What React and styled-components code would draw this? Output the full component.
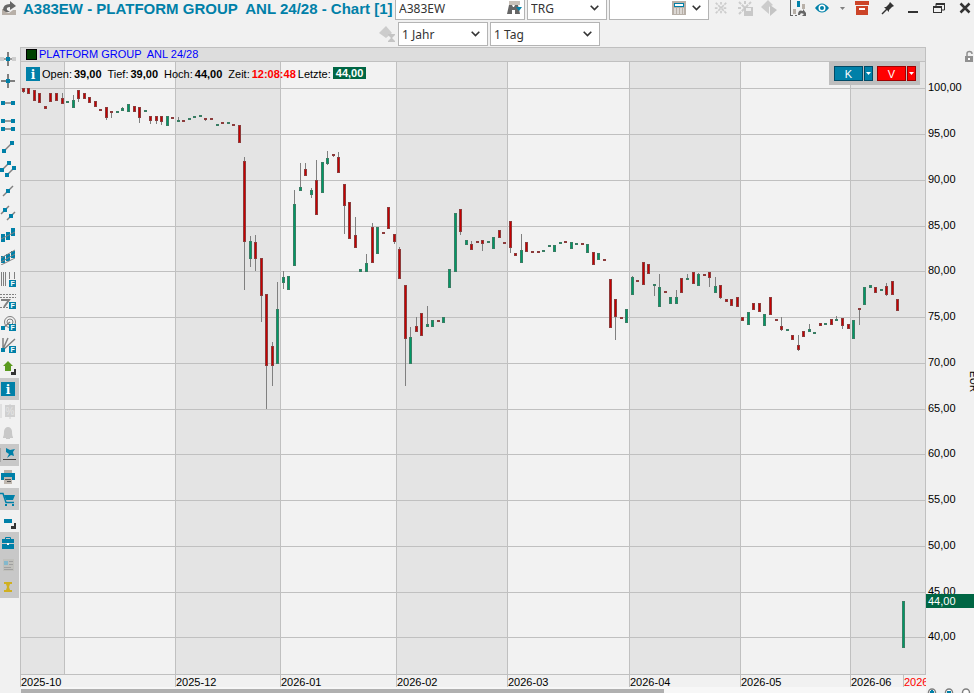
import React from 'react';
import styled, { createGlobalStyle } from 'styled-components'

const BLUE = '#0080a8'
const GREY = '#808080'

const GlobalStyle = createGlobalStyle`
     body {
          margin:0;
          background:#f1f1f1;
          overflow:hidden;
     }
     * {
          box-sizing:border-box;
     }
     button, input, select {
          font:inherit;
          color:inherit;
          margin:0;
          padding:0;
          border:0;
          background:none;
     }
     svg {
          display:block;
          flex:none;
     }
`

const Window = styled.main`
     font-family:'Liberation Sans', Arial, sans-serif;
     font-size:11px;
     color:#000;
`

const Header = styled.header`
     display:flex;
     height:20px;
     align-items:flex-end;
     overflow:hidden;
`

const Title = styled.h1`
     display:flex;
     flex:0 0 395px;
     align-items:center;
     gap:5px;
     height:24px;
     margin:0;
     padding:2px 0 0 2px;
     font-size:15px;
     line-height:20px;
     font-weight:bold;
     color:${BLUE};
     white-space:pre;
`

const Fields = styled.div`
     display:flex;
     gap:2px;
`

const PeriodBar = styled.div`
     display:flex;
     align-items:center;
     gap:2px;
     height:27px;
     padding:1px 0 0 378px;
`

const Field = styled.div`
     display:flex;
     position:relative;
     align-items:center;
     flex:none;
     width:${props => props.$width}px;
     height:24px;
     border:1px solid #b4b4b4;
     background:white;
     font-family:'Noto Sans', 'Open Sans', sans-serif;
     font-size:12px;
     color:#333;

     input, select {
          flex:1;
          min-width:0;
          height:22px;
          padding-left:3px;
          appearance:none;
          outline:none;
     }
`

const FieldIcons = styled.span`
     display:flex;
     position:absolute;
     right:7px;
     align-items:center;
     gap:6px;
     pointer-events:none;
`

const Tools = styled.div`
     display:flex;
     align-items:center;
     height:24px;
`

const Tool = styled.button`
     display:flex;
     align-items:center;
     justify-content:center;
     width:${props => props.$width || 24}px;
     height:24px;
     margin-left:${props => props.$gap || 0}px;
`

const WindowTools = styled(Tools)`
     gap:8px;
     margin-left:auto;
`

const Body = styled.div`
     display:grid;
     grid-template-columns:20px minmax(0, 1fr) 48px;
`

const Sidebar = styled.nav`
     display:flex;
     flex-direction:column;
     padding:1px 1px 0 0;
`

const SideButton = styled.button`
     display:flex;
     align-items:center;
     height:22px;
     background:${props => props.$active ? '#c8c8c8' : 'transparent'};
`

const Panel = styled.section`
     position:relative;
     border:1px solid #c0c0c0;
`

const PanelTitle = styled.h2`
     display:flex;
     align-items:center;
     gap:2px;
     height:14px;
     margin:0;
     padding-left:5px;
     border-bottom:1px solid #c0c0c0;
     background:#dddddd;
     font-size:11px;
     line-height:13px;
     font-weight:normal;
     color:#0000ff;
     white-space:pre;
`

const Swatch = styled.span`
     width:11px;
     height:11px;
     border:1px solid black;
     background:#004000;
`

const Plot = styled.svg`
     width:100%;
     height:612px;
`

const Quote = styled.div`
     display:flex;
     position:absolute;
     top:18px;
     left:4px;
     align-items:center;
     line-height:14px;
     white-space:nowrap;
`

const QuoteItem = styled.span`
     display:flex;
     gap:2px;
     margin-left:${props => props.$gap || 6}px;

     b {
          color:${props => props.$color || 'black'};
     }
`

const LastPrice = styled.b`
     && {
          height:12px;
          padding:0 3px;
          background:#006644;
          line-height:13px;
          color:white;
     }
`

const TradeBox = styled.div`
     display:flex;
     position:absolute;
     top:14px;
     right:5px;
     height:23px;
     padding:4px 4px 4px 5px;
     gap:4px;
     background:#bebebe;
`

const TradePair = styled.div`
     display:flex;
     gap:1px;
`

const TradeButton = styled.button`
     && {
          display:flex;
          align-items:center;
          justify-content:center;
          width:${props => props.$width}px;
          height:15px;
          border:1px solid ${props => props.$sell ? '#a00000' : '#004a66'};
          background:${props => props.$sell ? '#ff0000' : BLUE};
          color:white;
     }
`

const PriceScale = styled.svg`
     width:48px;
     height:627px;
`

const TimeScale = styled.div`
     display:grid;
     grid-column:2;
     grid-template-columns:${props => props.$columns};
     height:12px;
`

const TimeLabel = styled.span`
     overflow:hidden;
     border-left:1px solid #c0c0c0;
     line-height:15px;
     white-space:nowrap;
     color:${props => props.$current ? '#ff0000' : 'black'};
`

const ScrollTrack = styled.div`
     grid-column:2;
     height:6px;
     margin:0 0 0 1px;
     padding-top:2px;
     background:#f7f7f7;
`

const ScrollThumb = styled.div`
     width:71%;
     height:4px;
     background:#b0b0b0;
`

const ZoomTools = styled.div`
     display:flex;
     height:6px;
     gap:5px;
     overflow:hidden;
`

// plot space: x 21..925, y 62..674, one trading day is 5.535 wide
const FIRST_DAY = 23.3
const DAY = 5.535
const scaleY = price => Math.round(88.4 + (100 - price) * 9.15)

// [up, body top, body bottom, wick top, wick bottom]
const candles = [
     [0, 88, 92, 88, 93], [0, 88, 94], [0, 90, 101], [0, 93, 103], [0, 106, 109],
     [0, 93, 102], [0, 93, 101], [0, 98, 104, 93, 104], [1, 101, 103], [1, 100, 108, 95, 108],
     [0, 90, 99, 90, 102], [0, 93, 99], [0, 97, 103], [0, 101, 107], [0, 109, 111],
     [0, 107, 118, 107, 120], [0, 111, 113, 111, 118], [1, 111, 113], [1, 108, 111, 107, 111], [1, 104, 112],
     [0, 106, 112], [0, 107, 118, 107, 123], [1, 110, 112], [0, 116, 121, 116, 124], [0, 116, 121, 116, 124],
     [0, 116, 122, 116, 125], [1, 116, 126], [0, 117, 119], [1, 120, 122, 117, 122], [0, 120, 122],
     [1, 118, 120], [1, 116, 118], [1, 115, 117], [0, 118, 120, 118, 121], [0, 118, 120],
     [1, 124, 126], [0, 122, 124], [1, 122, 124], [0, 124, 126], [0, 125, 143],
     [0, 161, 242, 157, 290], [1, 241, 259, 236, 267], [0, 242, 259, 235, 271], [0, 258, 296, 258, 322], [0, 294, 366, 294, 409],
     [0, 346, 366, 342, 386], [1, 309, 364, 282, 364], [1, 277, 283, 271, 289], [1, 276, 290], [1, 204, 266, 190, 266],
     [1, 187, 191, 163, 191], [0, 169, 176, 163, 176], [1, 190, 195, 188, 198], [0, 180, 215, 160, 215], [1, 162, 193],
     [1, 158, 164, 151, 165], [0, 154, 156, 154, 157], [0, 157, 173, 152, 173], [0, 184, 206, 184, 234], [0, 202, 239],
     [0, 235, 248, 217, 248], [1, 269, 272], [1, 263, 272, 254, 272], [0, 227, 263, 223, 263], [1, 227, 254],
     [0, 232, 234], [0, 207, 229], [0, 234, 242, 234, 244], [0, 249, 279, 247, 279], [0, 285, 339, 285, 386],
     [1, 337, 364, 327, 364], [0, 326, 332, 317, 332], [0, 313, 336], [1, 324, 327, 306, 327], [1, 320, 327],
     [0, 320, 322], [1, 317, 323], [1, 269, 288], [1, 213, 272], [0, 209, 232, 209, 235],
     [1, 240, 245], [0, 244, 250, 241, 250], [0, 241, 243], [0, 240, 244, 240, 251], [1, 241, 243],
     [1, 237, 249], [0, 230, 238], [0, 242, 244], [0, 221, 248, 221, 253], [0, 253, 256],
     [1, 250, 263, 234, 263], [0, 242, 252], [0, 251, 253], [0, 251, 253], [1, 250, 252],
     [1, 245, 247], [1, 245, 252], [1, 242, 244], [0, 241, 243], [1, 242, 249],
     [1, 243, 245], [0, 243, 245], [1, 244, 253], [0, 252, 265], [1, 253, 260],
     [0, 259, 261], [0, 279, 328], [0, 299, 317, 299, 340], [0, 317, 319], [1, 309, 323],
     [1, 277, 295, 276, 295], [0, 280, 282], [0, 262, 285], [0, 264, 274], [1, 284, 286, 284, 296],
     [1, 287, 307, 274, 307], [0, 291, 293], [1, 297, 304], [1, 297, 304, 290, 304], [0, 278, 293],
     [1, 278, 280, 274, 280], [0, 272, 284], [1, 274, 286, 273, 286], [0, 274, 276], [0, 272, 278, 272, 287],
     [1, 286, 293, 277, 293], [0, 285, 298, 285, 299], [0, 299, 302], [0, 299, 306], [0, 297, 307],
     [0, 317, 321], [1, 312, 325], [0, 303, 310], [0, 303, 312], [1, 314, 326],
     [0, 297, 315], [0, 319, 321], [0, 326, 330, 317, 331], [1, 329, 331], [0, 335, 340],
     [0, 345, 350, 335, 351], [0, 331, 337], [1, 329, 332, 324, 332], [1, 332, 334], [0, 323, 326],
     [1, 323, 325], [0, 319, 325], [1, 319, 321, 316, 321], [0, 318, 326, 318, 329], [0, 324, 329],
     [1, 320, 339], [0, 308, 310, 308, 325], [1, 287, 305], [1, 285, 288], [0, 287, 293],
     [1, 289, 291], [0, 286, 295, 283, 296], [0, 281, 295], [0, 299, 311], [1, 601, 648],
]

const months = [21, 64, 175, 280, 396, 507, 629, 740, 850, 925]
const prices = [100, 95, 90, 85, 80, 75, 70, 65, 60, 55, 50, 45, 40]

const timeLabels = [
     { text: '2025-10', days: 155 },
     { text: '2025-12', days: 105 },
     { text: '2026-01', days: 116 },
     { text: '2026-02', days: 111 },
     { text: '2026-03', days: 122 },
     { text: '2026-04', days: 111 },
     { text: '2026-05', days: 110 },
     { text: '2026-06', days: 53 },
     { text: '2026-06', days: 23, current: true },
]

const Candle = ({ index, data }) => {
     const [up, top, bottom, high, low] = data
     const x = Math.floor(FIRST_DAY + index * DAY)
     return (
          <g>
               {high && <rect x={x} y={high} width="1" height={low - high} fill={GREY} />}
               <rect x={x - 1} y={top} width="3" height={bottom - top} fill={up ? '#3a7d64' : '#8c3c3c'} />
               {bottom - top > 2 &&
                    <rect x={x} y={top + 1} width="1" height={bottom - top - 2} fill={up ? '#009966' : '#c80000'} />}
          </g>
     )
}

const Icon = ({ children, size = 16 }) => (
     <svg width={size} height={size} viewBox="0 0 16 16" aria-hidden="true">{children}</svg>
)

const Chevron = () => (
     <svg width="9" height="6" viewBox="0 0 9 6" aria-hidden="true">
          <path d="M0.7 0.8 4.5 4.6 8.3 0.8" fill="none" stroke="#333" strokeWidth="1.6" />
     </svg>
)

const Caret = ({ color }) => (
     <svg width="5" height="3" viewBox="0 0 5 3" aria-hidden="true">
          <path d="M0 0H5L2.5 3Z" fill={color} />
     </svg>
)

const Dot = ({ x, y }) => <rect x={x - 2} y={y - 2} width="4" height="4" fill={BLUE} />

const Line = ({ d, color = GREY, width = 1.5 }) => (
     <path d={d} fill="none" stroke={color} strokeWidth={width} />
)

const FBadge = () => (
     <g>
          <rect x="9" y="9" width="7" height="7" fill={BLUE} />
          <text x="10.5" y="15" fontSize="7" fontWeight="bold" fill="white">F</text>
     </g>
)

const Corner = () => <path d="M16 10V16H11V13H14V10Z" fill="#333" />

const InfoSign = () => (
     <g>
          <rect x="1" y="1" width="14" height="14" fill={BLUE} />
          <text x="8" y="12.5" textAnchor="middle" fontFamily="'DejaVu Serif', serif" fontSize="12" fontWeight="bold" fill="white">i</text>
     </g>
)

const sideTools = [
     { name: 'Fadenkreuz verfolgen', icon: <><Line d="M8 1V15" width={2} /><Line d="M1 6V10M3 6V10M13 6V10M15 6V10" width={1} color="#aaa" /><Line d="M4 8H12" /><Dot x={8} y={8} /></> },
     { name: 'Fadenkreuz', icon: <><Line d="M8 1V15M1 8H15" width={2} /><Dot x={8} y={8} /></> },
     { name: 'Strecke', icon: <><Line d="M3 8H13" /><Dot x={3} y={8} /><Dot x={13} y={8} /></> },
     { name: 'Kanal', icon: <><Line d="M3 4H13M3 12H13" /><Dot x={3} y={4} /><Dot x={13} y={4} /><Dot x={3} y={12} /><Dot x={13} y={12} /></> },
     { name: 'Trendlinie', icon: <><Line d="M4 12 12 4" /><Dot x={4} y={12} /><Dot x={12} y={4} /></> },
     { name: 'Trendkanal', icon: <><Line d="M2 9 9 2M7 14 14 7" /><Dot x={2} y={9} /><Dot x={9} y={2} /><Dot x={7} y={14} /><Dot x={14} y={7} /></> },
     { name: 'Gerade', icon: <><Line d="M3 13 13 3" /><Dot x={8} y={8} /></> },
     { name: 'Parallelen', icon: <><Line d="M1 9 9 1M7 15 15 7" /><Dot x={5} y={5} /><Dot x={11} y={11} /></> },
     { name: 'Regression', icon: <><path d="M1 7H5V15H1ZM6 5H10V13H6ZM11 1H15V9H11Z" fill={BLUE} /><Line d="M1 12 15 5" width={1} /></> },
     { name: 'Regressionskanal', icon: <><path d="M1 7H5V14H1ZM6 5H10V12H6ZM11 2H15V9H11Z" fill={BLUE} /><Line d="M1 9 15 1M1 13 15 5M1 16 15 9" width={1} /></> },
     { name: 'Fibonacci Zeitzonen', icon: <><Line d="M1.5 1V15M3.5 1V15M5.5 1V15M9.5 1V8M14.5 1V8" width={1} /><FBadge /></> },
     { name: 'Fibonacci Retracement', icon: <><path d="M0 1.5H16M0 4.5H16M0 14.5H8" stroke={GREY} strokeDasharray="2 1" /><Line d="M1 7H9L4 14" width={2} /><FBadge /></> },
     { name: 'Fibonacci Kreise', icon: <><circle cx="10" cy="7" r="5.5" fill="none" stroke={GREY} /><circle cx="10" cy="7" r="3" fill="none" stroke={GREY} /><Line d="M3 13 10 7" /><Dot x={3} y={13} /><FBadge /></> },
     { name: 'Fibonacci Fächer', icon: <><Line d="M3 12V1M3 12 8 1M3 13 15 2" /><Dot x={3} y={13} /><FBadge /></> },
     { name: 'Pfeil', icon: <><path d="M8 2 13 7H11V12H5V7H3Z" fill="#5a9a1e" /><Corner /></> },
     { name: 'Info', active: true, icon: <InfoSign /> },
     { name: 'Prozent', icon: <><rect x="5" y="2" width="10" height="12" fill="#d0d0d0" /><Line d="M1 1V15M10 1V16" color="#d0d0d0" width={1} /><text x="5.5" y="12" fontSize="10" fill="#e4e4e4">%</text></> },
     { name: 'Alarm', icon: <path d="M3 12Q4 11 4 6Q5 2 8 2Q11 2 12 6Q12 11 13 12V13H10V14H6V13H3Z" fill="#c8c8c8" /> },
     { name: 'Fixieren', active: true, icon: <><path d="M6 1 10 3 15 2 13 5 14 9 11 8 7 11 9 7 6 5Z" fill={BLUE} /><Line d="M3 12.5H16" width={1} color="#444" /><Line d="M0.5 1V15" width={1} color="#a8a8a8" /></> },
     { name: 'Drucken', icon: <><rect x="4" y="1" width="8" height="5" fill="#b8b0a8" /><rect x="1" y="4" width="14" height="7" fill={BLUE} /><rect x="4" y="8" width="8" height="7" fill="#c0b8b0" /><Line d="M5 10.5H11M7 12.5H11" width={1} color="#555" /></> },
     { name: 'Handel', active: true, icon: <><Line d="M0 2.5H3L6 11.5H14" color={BLUE} /><path d="M4 4H15L13 9H6Z" fill={BLUE} /><rect x="5" y="13" width="2" height="2" fill={BLUE} /><rect x="12" y="13" width="2" height="2" fill={BLUE} /></> },
     { name: 'Farbe', icon: <><rect x="4" y="6" width="8" height="4" fill={BLUE} /><Corner /></> },
     { name: 'Depot', active: true, icon: <><Line d="M5.5 4V2.5H10.5V4" width={1} color={BLUE} /><path d="M2 4H14V8H2ZM2 9H14V14H2Z" fill={BLUE} /><rect x="7" y="8" width="2" height="2" fill="white" /></> },
     { name: 'Nachrichten', active: true, icon: <><rect x="3" y="2" width="11" height="12" fill="#c0c0bc" /><rect x="4" y="4" width="4" height="4" fill="#84b8cc" /><Line d="M9 4.5H13M9 7.5H13M4 10.5H11M4 12.5H13" width={1} color="#a0a0a0" /></> },
     { name: 'Zeitraum', active: true, icon: <path d="M4 3H12V5H10L9 8 10 11H12V13H4V11H6L7 8 6 5H4Z" fill="#d0b020" /> },
]

const Burst = () => <path d="M2 2 6 6M14 2 10 6M2 14 6 10M14 14 10 10M8 1V5M8 11V15M1 8H5M11 8H15M6 6 10 10M10 6 6 10" stroke="#cccccc" strokeWidth="2" strokeDasharray="3 1" fill="none" />

const SelectField = ({ label, width, value, icon }) => (
     <Field $width={width}>
          <select aria-label={label} defaultValue={value}>
               <option>{value}</option>
          </select>
          <FieldIcons>{icon}<Chevron /></FieldIcons>
     </Field>
)

const calculator = (
     <svg width="14" height="14" viewBox="0 0 14 14" aria-hidden="true">
          <rect width="14" height="14" fill="#b8b0a8" />
          <rect x="2" y="2" width="10" height="4" fill={BLUE} />
          <rect x="3" y="3" width="8" height="2" fill="white" />
          <path d="M2 8H12M2 10H12M2 12H12" stroke="white" strokeDasharray="2 1" />
     </svg>
)

const TopBar = () => (
     <Header>
          <Title>
               <Icon>
                    <path d="M0 8H4V11L7 12 11 9H14V14H0Z" fill="#b8b0a8" />
                    <path d="M1 9Q1 3 8 3V0L14 5 8 9V6Q4 6 5 9L8 11H4Z" fill="#666" />
               </Icon>
               {'A383EW - PLATFORM GROUP  ANL 24/28 - Chart [1]'}
          </Title>
          <Fields>
               <Field $width={130}>
                    <input aria-label="Wertpapier" defaultValue="A383EW" />
                    <Tool $width={20} aria-label="Suchen">
                         <Icon>
                              <path d="M3 1H14V5H3Z" fill="#c8c0b8" />
                              <path d="M3 5H6L7 7H8L9 5H12L14 14H9V10H6V14H1Z" fill="#666" />
                              <path d="M10 7H16L13 11Z" fill={BLUE} />
                         </Icon>
                    </Tool>
               </Field>
               <SelectField label="Börse" width={80} value="TRG" />
               <SelectField label="Rechner" width={100} value="" icon={calculator} />
          </Fields>
          <Tools>
               <Tool aria-label="Neu"><Icon size={14}><Burst /></Icon></Tool>
               <Tool aria-label="Vorlage speichern">
                    <Icon><Burst /><rect x="7" y="7" width="9" height="9" fill="#c8c8c8" /><rect x="9" y="8" width="5" height="3" fill="#eee" /></Icon>
               </Tool>
               <Tool aria-label="Vorlage laden">
                    <Icon><path d="M0 7 7 0 12 5 8 7 8 14Z" fill="#cccccc" /><path d="M9 5 16 10 9 16Z" fill="#c4c4c4" /></Icon>
               </Tool>
               <Tool $gap={5} aria-label="Charttyp">
                    <Icon>
                         <path d="M0.5 0V15M0 15.5H3M5 15.5H7" stroke="#666" fill="none" />
                         <path d="M3 9H6V14H3ZM12 4H15V9H12Z" fill="#b8b0a8" />
                         <rect x="7" y="1" width="3" height="6" fill={BLUE} />
                         <path d="M8 15Q8 9 13 11V9L16 13V16H12L14 14Q10 12 10 15Z" fill="#666" />
                    </Icon>
               </Tool>
               <Tool aria-label="Ansicht">
                    <Icon>
                         <path d="M1 8Q8 -1 15 8Q8 17 1 8Z" fill={BLUE} />
                         <circle cx="8" cy="8" r="3.5" fill="white" />
                         <circle cx="8" cy="8" r="2" fill={BLUE} />
                    </Icon>
               </Tool>
               <Tool $width={16} aria-label="Ansicht wählen"><Caret color={GREY} /></Tool>
               <Tool aria-label="Archiv">
                    <Icon><path d="M1 1H15V5H1ZM2 6H14V15H2Z" fill="#cc4428" /><rect x="5" y="8" width="6" height="2" fill="white" /></Icon>
               </Tool>
               <Tool $gap={2} aria-label="Anheften">
                    <Icon><path d="M10 2 14 6 12 7 9 10V12L4 7H6L9 4Z" fill="#333" /><path d="M7 9 2 14" stroke="#333" strokeWidth="1.5" /></Icon>
               </Tool>
          </Tools>
          <WindowTools>
               <Tool $width={18} aria-label="Minimieren"><Icon><rect x="3" y="11" width="10" height="2" fill="#333" /></Icon></Tool>
               <Tool $width={18} aria-label="Wiederherstellen">
                    <Icon><path d="M5 6V3.5H13.5V10H11" fill="none" stroke="#333" /><path d="M5 3H14V5H5Z" fill="#333" /><rect x="2.5" y="6.5" width="8" height="6" fill="none" stroke="#333" /><rect x="2" y="6" width="9" height="2" fill="#333" /></Icon>
               </Tool>
               <Tool $width={18} aria-label="Schließen"><Icon><path d="M3.5 3.5 12.5 12.5M12.5 3.5 3.5 12.5" stroke="#333" strokeWidth="2.5" /></Icon></Tool>
          </WindowTools>
     </Header>
)

const PricePlot = () => (
     <Plot viewBox="21 62 904 612" preserveAspectRatio="none" shapeRendering="crispEdges" role="img" aria-label="Kerzenchart">
          {months.slice(0, -1).map((x, i) => (
               <rect key={x} x={x} y="62" width={months[i + 1] - x} height="612" fill={i % 2 ? '#f2f2f2' : '#e4e4e4'} />
          ))}
          {months.slice(1, -1).map(x => <rect key={x} x={x} y="62" width="1" height="612" fill="#c0c0c0" />)}
          {prices.map(p => <rect key={p} x="21" y={scaleY(p)} width="904" height="1" fill="#c0c0c0" />)}
          {candles.map((data, i) => <Candle key={i} index={i} data={data} />)}
     </Plot>
)

const PriceAxis = () => (
     <PriceScale viewBox="926 47 48 627">
          {prices.map(p => <text key={p} x="928" y={scaleY(p) + 3}>{p},00</text>)}
          <rect x="926" y="594" width="48" height="14" fill="#006644" />
          <text x="928" y="605" fill="white">44,00</text>
          <text transform="translate(970 371) rotate(90)" fontSize="10">EUR</text>
          <g>
               <rect x="965" y="56" width="8" height="6" fill="#909090" />
               <path d="M967 56V53.5Q967 51.5 969.5 51.5Q972 51.5 972 54" fill="none" stroke="#909090" strokeWidth="1.5" />
               <rect x="968" y="58" width="2" height="2" fill="white" />
          </g>
     </PriceScale>
)

const Trade = ({ label, sell }) => (
     <TradePair>
          <TradeButton $width={29} $sell={sell}>{label}</TradeButton>
          <TradeButton $width={9} $sell={sell} aria-label={label + ' Optionen'}><Caret color="white" /></TradeButton>
     </TradePair>
)

const zoomIcons = [
     { name: 'Vergrößern', sign: 'M4 5H8M6 3V7' },
     { name: 'Verkleinern', sign: 'M4 5H8' },
     { name: 'Alles zeigen', sign: '' },
]

const App = () => {
     return (
          <Window>
               <GlobalStyle />
               <TopBar />
               <PeriodBar>
                    <Tool $width={18} aria-label="Verlauf">
                         <Icon><path d="M0 7 7 0 13 7 7 12Z" fill="#cccccc" /><path d="M9 8H16V9L13 12 16 15V16H9V15L12 12 9 9Z" fill="#c4c4c4" /></Icon>
                    </Tool>
                    <SelectField label="Zeitraum" width={90} value="1 Jahr" />
                    <SelectField label="Intervall" width={110} value="1 Tag" />
               </PeriodBar>
               <Body>
                    <Sidebar>
                         {sideTools.map(tool => (
                              <SideButton key={tool.name} $active={tool.active} aria-label={tool.name}>
                                   <Icon>{tool.icon}</Icon>
                              </SideButton>
                         ))}
                    </Sidebar>
                    <Panel>
                         <PanelTitle><Swatch />{'PLATFORM GROUP  ANL 24/28'}</PanelTitle>
                         <PricePlot />
                         <Quote>
                              <Icon><InfoSign /></Icon>
                              <QuoteItem $gap={1}>Open: <b>39,00</b></QuoteItem>
                              <QuoteItem>Tief: <b>39,00</b></QuoteItem>
                              <QuoteItem>Hoch: <b>44,00</b></QuoteItem>
                              <QuoteItem $color="red">Zeit: <b>12:08:48</b></QuoteItem>
                              <QuoteItem $gap={2}>Letzte: <LastPrice>44,00</LastPrice></QuoteItem>
                         </Quote>
                         <TradeBox>
                              <Trade label="K" />
                              <Trade label="V" sell />
                         </TradeBox>
                    </Panel>
                    <PriceAxis />
                    <TimeScale $columns={timeLabels.map(l => `minmax(0, ${l.days}fr)`).join(' ')}>
                         {timeLabels.map((l, i) => <TimeLabel key={i} $current={l.current}>{l.text}</TimeLabel>)}
                    </TimeScale>
                    <ScrollTrack><ScrollThumb /></ScrollTrack>
                    <ZoomTools>
                         {zoomIcons.map(z => (
                              <Tool key={z.name} $width={12} aria-label={z.name}>
                                   <svg width="12" height="24" viewBox="0 0 12 24">
                                        <circle cx="6" cy="5.5" r="3.5" fill="white" stroke={GREY} strokeWidth="1.5" />
                                        <path d={z.sign} stroke={BLUE} strokeWidth="2" />
                                   </svg>
                              </Tool>
                         ))}
                    </ZoomTools>
               </Body>
          </Window>
     )
}

export default App
